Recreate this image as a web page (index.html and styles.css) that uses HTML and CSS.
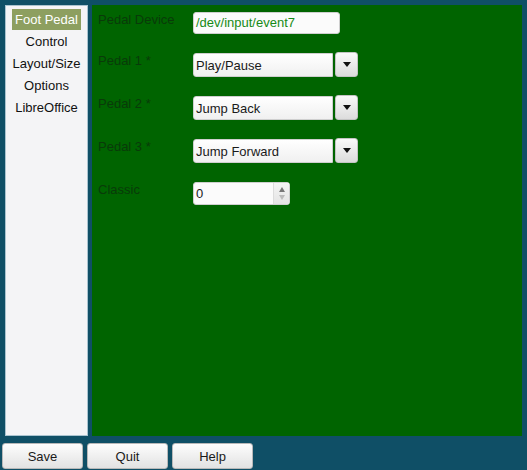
FILE: index.html
```html
<!DOCTYPE html>
<html>
<head>
<meta charset="utf-8">
<link rel="stylesheet" href="styles.css">
</head>
<body>
<div class="main">
  <ul class="nav">
    <li class="nav-item active">Foot Pedal</li>
    <li class="nav-item">Control</li>
    <li class="nav-item">Layout/Size</li>
    <li class="nav-item">Options</li>
    <li class="nav-item">LibreOffice</li>
  </ul>
  <div class="panel">
    <div class="form">
      <div class="label">Pedal Device</div>
      <div class="field"><div class="text-input">/dev/input/event7</div></div>

      <div class="label">Pedal 1 *</div>
      <div class="field combo"><div class="combo-text">Play/Pause</div><div class="combo-btn"><span class="tri"></span></div></div>

      <div class="label">Pedal 2 *</div>
      <div class="field combo"><div class="combo-text">Jump Back</div><div class="combo-btn"><span class="tri"></span></div></div>

      <div class="label">Pedal 3 *</div>
      <div class="field combo"><div class="combo-text">Jump Forward</div><div class="combo-btn"><span class="tri"></span></div></div>

      <div class="label">Classic</div>
      <div class="field"><div class="spin"><div class="spin-text">0</div><div class="spin-arrows"><span class="up"></span><span class="down"></span></div></div></div>
    </div>
  </div>
</div>
<div class="buttons">
  <button class="btn">Save</button>
  <button class="btn">Quit</button>
  <button class="btn">Help</button>
</div>
</body>
</html>
```
FILE: styles.css
```css
html, body {
  margin: 0;
  padding: 0;
  height: 100%;
}
body {
  background: #0f4f66;
  font-family: "Liberation Sans", Arial, sans-serif;
  font-size: 13px;
  width: 527px;
  height: 470px;
  overflow: hidden;
}
.main {
  display: flex;
  gap: 4px;
  padding: 5px 5px 0 5px;
  height: 431px;
}
.nav {
  list-style: none;
  margin: 0;
  padding: 3px 0 0 0;
  width: 81px;
  background: #f4f4f6;
  border: 1px solid #a9c3cf;
  box-sizing: content-box;
  height: 426px;
}
.nav-item {
  margin: 0 6px;
  height: 22px;
  line-height: 21px;
  text-align: center;
  color: #111;
  white-space: nowrap;
  display: flex;
  justify-content: center;
}
.nav-item.active {
  background: #8d9f60;
  color: #fff;
  height: 21px;
  margin-bottom: 1px;
}
.panel {
  flex: 1;
  background: #006400;
  height: 431px;
  padding: 7px 0 0 6px;
  box-sizing: border-box;
}
.form {
  display: grid;
  grid-template-columns: 95px 170px;
  grid-template-rows: 22px 24px 24px 24px 23px;
  row-gap: 19px;
}
.label {
  color: #093a09;
  line-height: 15px;
  margin-top: 0;
  white-space: nowrap;
}
.field {
  display: flex;
}
.text-input {
  width: 147px;
  height: 22px;
  box-sizing: border-box;
  background: #fbfbfb;
  border: 1px solid #cfcfcf;
  border-radius: 3px;
  color: #168a16;
  padding: 0 2px;
  line-height: 20px;
}
.combo {
  gap: 2px;
}
.combo-text {
  width: 140px;
  height: 24px;
  box-sizing: border-box;
  background: linear-gradient(#ffffff, #f0f0f0);
  border: 1px solid #cfcfcf;
  border-radius: 3px 0 0 3px;
  color: #1a1a1a;
  padding: 0 2px;
  line-height: 23px;
}
.combo-btn {
  width: 23px;
  height: 25px;
  margin-top: -1px;
  box-sizing: border-box;
  background: linear-gradient(#fafafa, #dcdcdc);
  border: 1px solid #c4c4c4;
  border-radius: 3px;
  display: flex;
  align-items: center;
  justify-content: center;
}
.tri {
  width: 0;
  height: 0;
  border-left: 4px solid transparent;
  border-right: 4px solid transparent;
  border-top: 5px solid #111;
}
.spin {
  display: flex;
  width: 97px;
  height: 23px;
  box-sizing: border-box;
  background: #fbfbfb;
  border: 1px solid #cfcfcf;
  border-radius: 3px;
}
.spin-text {
  flex: 1;
  padding: 0 2px;
  line-height: 21px;
  color: #1a1a1a;
}
.spin-arrows {
  width: 15px;
  border-left: 1px solid #dcdcdc;
  background: linear-gradient(#f4f4f4, #e4e4e4);
  display: flex;
  flex-direction: column;
  align-items: center;
  justify-content: center;
  gap: 3px;
}
.up {
  width: 0;
  height: 0;
  border-left: 3px solid transparent;
  border-right: 3px solid transparent;
  border-bottom: 5px solid #777;
}
.down {
  width: 0;
  height: 0;
  border-left: 3px solid transparent;
  border-right: 3px solid transparent;
  border-top: 5px solid #bbb;
}
.buttons {
  display: flex;
  gap: 4px;
  padding: 7px 0 0 2px;
}
.btn {
  width: 81px;
  height: 26px;
  font-family: "Liberation Sans", Arial, sans-serif;
  font-size: 13px;
  color: #1a1a1a;
  background: linear-gradient(#fdfdfd, #e2e2e2);
  border: 1px solid #b8b8b8;
  border-radius: 3px;
  padding: 0;
  margin: 0;
}
```
